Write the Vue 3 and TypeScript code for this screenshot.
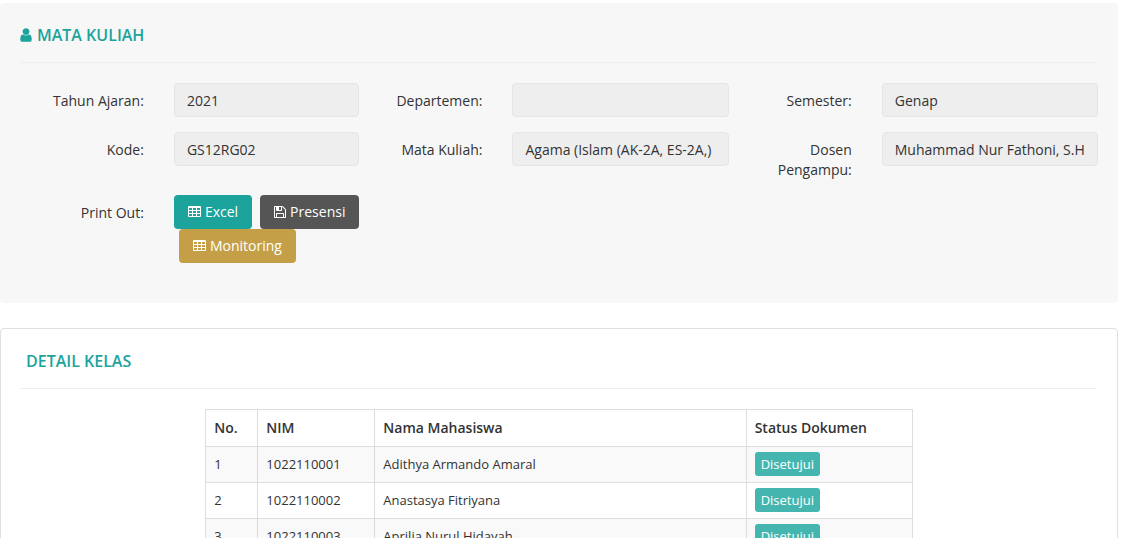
<script setup lang="ts">
interface Field {
  id: string
  label: string
  value: string
}

interface Student {
  no: number
  nim: string
  name: string
  status: string
}

const fieldRows: Field[][] = [
  [
    { id: 'tahun', label: 'Tahun Ajaran:', value: '2021' },
    { id: 'departemen', label: 'Departemen:', value: '' },
    { id: 'semester', label: 'Semester:', value: 'Genap' },
  ],
  [
    { id: 'kode', label: 'Kode:', value: 'GS12RG02' },
    { id: 'matkul', label: 'Mata Kuliah:', value: 'Agama (Islam (AK-2A, ES-2A,)' },
    { id: 'dosen', label: 'Dosen Pengampu:', value: 'Muhammad Nur Fathoni, S.H' },
  ],
]

const students: Student[] = [
  { no: 1, nim: '1022110001', name: 'Adithya Armando Amaral', status: 'Disetujui' },
  { no: 2, nim: '1022110002', name: 'Anastasya Fitriyana', status: 'Disetujui' },
  { no: 3, nim: '1022110003', name: 'Aprilia Nurul Hidayah', status: 'Disetujui' },
]
</script>

<template>
  <main class="page">
    <section class="course">
      <h2 class="title">
        <svg class="icon-user" viewBox="256 0 1280 1792" aria-hidden="true">
          <path d="M1536 1399q0 109-62.5 187t-150.5 78h-854q-88 0-150.5-78t-62.5-187q0-85 8.5-160.5t31.5-152 58.5-131 94-89 134.5-34.5q131 128 313 128t313-128q76 0 134.5 34.5t94 89 58.5 131 31.5 152 8.5 160.5zm-256-887q0 159-112.5 271.5t-271.5 112.5-271.5-112.5-112.5-271.5 112.5-271.5 271.5-112.5 271.5 112.5 112.5 271.5z" />
        </svg>
        MATA KULIAH
      </h2>
      <form class="form" @submit.prevent>
        <div v-for="(row, r) in fieldRows" :key="r" class="form-row">
          <div v-for="field in row" :key="field.id" class="group">
            <label class="label" :for="field.id">{{ field.label }}</label>
            <div class="control">
              <input :id="field.id" class="input" type="text" :value="field.value" readonly />
            </div>
          </div>
        </div>
        <div class="form-row">
          <div class="group" role="group" aria-labelledby="print-label">
            <span id="print-label" class="label">Print Out:</span>
            <div class="control actions">
              <button type="button" class="btn teal">
                <svg class="icon-table" viewBox="0 0 13 12" aria-hidden="true">
                  <path fill-rule="evenodd" d="M1 0h11q1 0 1 1v9q0 1-1 1h-11q-1 0-1-1v-9q0-1 1-1zM1 2v2h3v-2zM5 2v2h3v-2zM9 2v2h3v-2zM1 5v2h3v-2zM5 5v2h3v-2zM9 5v2h3v-2zM1 8v2h3v-2zM5 8v2h3v-2zM9 8v2h3v-2z" />
                </svg>
                Excel
              </button>
              <button type="button" class="btn dark spaced">
                <svg class="icon-save" viewBox="128 0 1536 1792" aria-hidden="true">
                  <path d="M512 1536h768v-384h-768v384zm896 0h128v-896q0-14-10-38.5t-20-34.5l-281-281q-10-10-34-20t-39-10v416q0 40-28 68t-68 28h-576q-40 0-68-28t-28-68v-416h-128v1280h128v-416q0-40 28-68t68-28h832q40 0 68 28t28 68v416zm-384-928v-320q0-13-9.5-22.5t-22.5-9.5h-192q-13 0-22.5 9.5t-9.5 22.5v320q0 13 9.5 22.5t22.5 9.5h192q13 0 22.5-9.5t9.5-22.5zm640 32v928q0 40-28 68t-68 28h-1344q-40 0-68-28t-28-68v-1344q0-40 28-68t68-28h928q40 0 88 20t76 48l280 280q28 28 48 76t20 88z" />
                </svg>
                Presensi
              </button>
              <button type="button" class="btn gold spaced">
                <svg class="icon-table" viewBox="0 0 13 12" aria-hidden="true">
                  <path fill-rule="evenodd" d="M1 0h11q1 0 1 1v9q0 1-1 1h-11q-1 0-1-1v-9q0-1 1-1zM1 2v2h3v-2zM5 2v2h3v-2zM9 2v2h3v-2zM1 5v2h3v-2zM5 5v2h3v-2zM9 5v2h3v-2zM1 8v2h3v-2zM5 8v2h3v-2zM9 8v2h3v-2z" />
                </svg>
                Monitoring
              </button>
            </div>
          </div>
        </div>
      </form>
    </section>

    <section class="detail">
      <h2 class="title detail-title">DETAIL KELAS</h2>
      <div class="table-wrap">
        <table class="table">
          <colgroup>
            <col class="col-no" />
            <col class="col-nim" />
            <col />
            <col class="col-status" />
          </colgroup>
          <thead>
            <tr>
              <th scope="col">No.</th>
              <th scope="col">NIM</th>
              <th scope="col">Nama Mahasiswa</th>
              <th scope="col">Status Dokumen</th>
            </tr>
          </thead>
          <tbody>
            <tr v-for="student in students" :key="student.nim">
              <td>{{ student.no }}</td>
              <td>{{ student.nim }}</td>
              <td>{{ student.name }}</td>
              <td><span class="badge">{{ student.status }}</span></td>
            </tr>
          </tbody>
        </table>
      </div>
    </section>
  </main>
</template>

<style>
body {
  margin: 0;
  background: #fff;
}
</style>

<style scoped>
.page,
.page * {
  box-sizing: border-box;
}

.page {
  padding: 3px 8px 0 0;
  font: 14px/20px "Open Sans", "Noto Sans", sans-serif;
  color: #333;
}

.course {
  padding: 12px 20px 40px;
  background: #f7f7f7;
  border-radius: 4px;
}

.title {
  display: flex;
  align-items: center;
  gap: 5px;
  margin: 0 0 20px;
  padding: 10px 0 17px;
  border-bottom: 1px solid #eee;
  font-size: 16px;
  font-weight: 600;
  line-height: 20px;
  color: #1ba39c;
}

.icon-user {
  width: 12px;
  height: 16px;
  fill: currentColor;
}

.form {
  display: flex;
  flex-direction: column;
  gap: 15px;
  margin: 0 -15px;
}

.form-row {
  display: grid;
  grid-template-columns: repeat(3, 1fr);
}

.group {
  display: grid;
  grid-template-columns: 4fr 8fr;
  min-width: 0;
}

.group:first-child {
  grid-template-columns: 5fr 7fr;
}

.label {
  padding: 8px 15px 0;
  text-align: right;
}

.control {
  min-width: 0;
  padding: 0 15px;
}

.input {
  display: block;
  width: 100%;
  height: 34px;
  padding: 6px 12px;
  border: 1px solid #e5e5e5;
  border-radius: 4px;
  background: #eee;
  font: inherit;
  color: #333;
}

.actions {
  display: flex;
  flex-wrap: wrap;
  column-gap: 3px;
  padding-right: 8px;
}

.btn {
  display: flex;
  align-items: center;
  gap: 4px;
  height: 34px;
  padding: 0 14px;
  border: 0;
  border-radius: 4px;
  font: inherit;
  color: #fff;
}

.btn svg {
  fill: currentColor;
}

.spaced {
  margin-left: 5px;
}

.teal {
  background: #1ba39c;
}

.dark {
  background: #555;
}

.gold {
  background: #c49f47;
}

.icon-table {
  width: 13px;
  height: 12px;
}

.icon-save {
  width: 12px;
  height: 14px;
}

.detail {
  margin-top: 25px;
  padding: 12px 20px 20px;
  border: 1px solid #e0e0e0;
  border-radius: 4px;
}

.detail-title {
  padding-left: 5px;
}

.table-wrap {
  display: grid;
  grid-template-columns: 2fr 8fr 2fr;
  margin: 0 -15px;
}

.table {
  grid-column: 2;
  margin: 0 15px;
  table-layout: fixed;
  border-collapse: collapse;
  font-size: 13px;
}

.col-no {
  width: 52px;
}

.col-nim {
  width: 117px;
}

.col-status {
  width: 166px;
}

.table th,
.table td {
  height: 36px;
  padding: 0 8px;
  border: 1px solid #ddd;
  text-align: left;
  vertical-align: middle;
}

.table th {
  height: 37px;
  font-size: 14px;
  font-weight: 600;
}

.table td {
  padding-bottom: 2px;
}

.table tbody tr:nth-child(odd) {
  background: #f9f9f9;
}

.badge {
  display: block;
  width: fit-content;
  padding: 2px 6px;
  border-radius: 3px;
  background: #45b6af;
  color: #fff;
}
</style>
